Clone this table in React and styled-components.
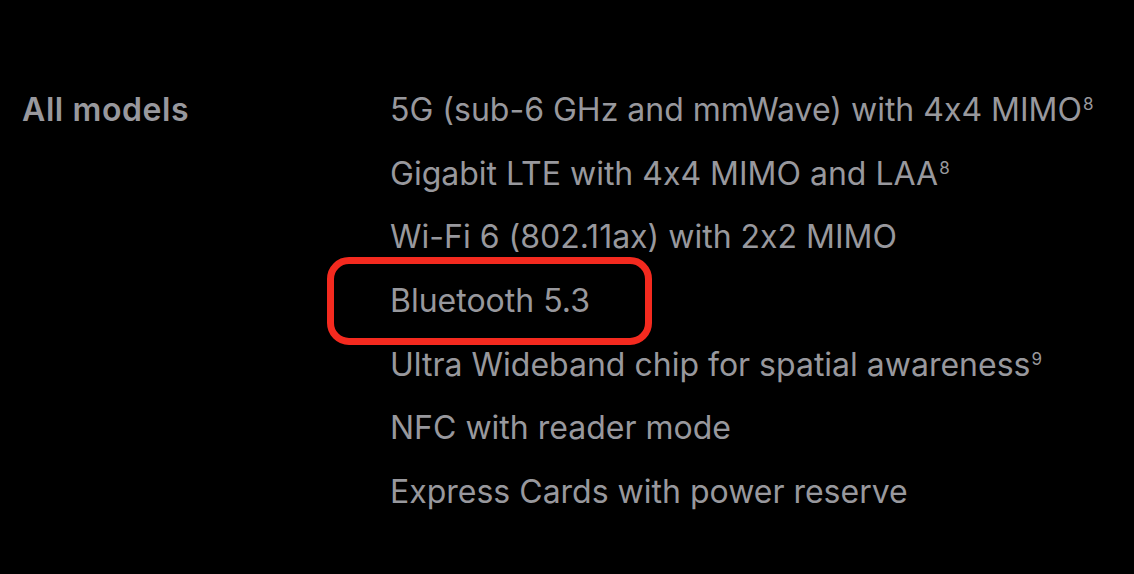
import React from "react";
import styled, { createGlobalStyle } from "styled-components";

const Global = createGlobalStyle`
  html, body { margin: 0; padding: 0; background: #000; }
  body {
    font-family: Inter, "Noto Sans", sans-serif;
    -webkit-font-smoothing: antialiased;
    font-feature-settings: "calt" 0;
  }
`;

const Page = styled.div`
  width: 1134px;
  height: 574px;
  background: #000;
  overflow: hidden;
  box-sizing: border-box;
  padding: 78px 0 0 22px;
  display: grid;
  grid-template-columns: 368px 1fr;
  align-items: start;
`;

const Label = styled.div`
  color: #98989d;
  font-size: 32px;
  font-weight: 600;
  line-height: 64px;
  letter-spacing: 0.6px;
`;

const List = styled.ul`
  list-style: none;
  margin: 0;
  padding: 0;
  display: flex;
  flex-direction: column;
`;

const Item = styled.li`
  position: relative;
  color: #98989d;
  font-size: 32px;
  font-weight: 400;
  height: 63.7px;
  line-height: 63.7px;
  letter-spacing: 0;
  white-space: nowrap;
  font-feature-settings: "calt" 0;
`;

const Sup = styled.sup`
  font-size: 17px;
  line-height: 0;
  vertical-align: 0;
  position: relative;
  top: -11px;
  margin-left: 1px;
`;

const Highlight = styled.span`
  position: absolute;
  left: -63px;
  top: -12px;
  width: 325px;
  height: 88px;
  box-sizing: border-box;
  border: 7px solid #f42a1f;
  border-radius: 22px;
  pointer-events: none;
`;

const items = [
  { text: "5G (sub-6 GHz and mmWave) with 4x4 MIMO", note: "8" },
  { text: "Gigabit LTE with 4x4 MIMO and LAA", note: "8" },
  { text: "Wi-Fi 6 (802.11ax) with 2x2 MIMO" },
  { text: "Bluetooth 5.3", highlight: true },
  { text: "Ultra Wideband chip for spatial awareness", note: "9" },
  { text: "NFC with reader mode" },
  { text: "Express Cards with power reserve" },
];

export default function App() {
  return (
    <>
      <Global />
      <Page>
        <Label>All models</Label>
        <List>
          {items.map((it) => (
            <Item key={it.text}>
              {it.text}
              {it.note && <Sup>{it.note}</Sup>}
              {it.highlight && <Highlight />}
            </Item>
          ))}
        </List>
      </Page>
    </>
  );
}
